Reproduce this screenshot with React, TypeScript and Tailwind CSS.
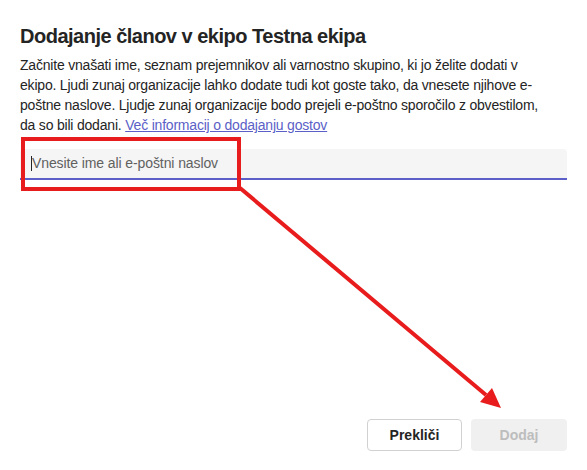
import React from "react";

const AddMembersDialog = () => {
  return (
    <div
      className="relative w-[587px] h-[470px] bg-white overflow-hidden flex flex-col px-5"
      style={{ fontFamily: '"Liberation Sans", Arial, sans-serif' }}
    >
      {/* Title */}
      <h1 className="pt-[22px] text-[20px] leading-[28px] font-semibold tracking-[-0.5px] text-[#242424]">
        Dodajanje članov v ekipo Testna ekipa
      </h1>

      {/* Description */}
      <p className="mt-[5px] text-[14px] leading-[20px] tracking-[-0.2px] text-[#242424] whitespace-nowrap">
        <span className="block">
          Začnite vnašati ime, seznam prejemnikov ali varnostno skupino, ki jo želite dodati v
        </span>
        <span className="block">
          ekipo. Ljudi zunaj organizacije lahko dodate tudi kot goste tako, da vnesete njihove e-
        </span>
        <span className="block">
          poštne naslove. Ljudje zunaj organizacije bodo prejeli e-poštno sporočilo z obvestilom,
        </span>
        <span className="block">
          da so bili dodani.{" "}
          <a href="#" className="text-[#5b5fc7] underline">
            Več informacij o dodajanju gostov
          </a>
        </span>
      </p>

      {/* Input */}
      <div className="mt-[14px] h-[31px] bg-[#f5f5f5] rounded-t-[4px] border-b-2 border-[#5b5fc7] flex items-center pl-[11px]">
        <span className="w-px h-[15px] bg-[#242424]" />
        <span className="text-[14px] tracking-[-0.1px] text-[#616161]">Vnesite ime ali e-poštni naslov</span>
      </div>

      <div className="flex-1" />

      {/* Actions */}
      <div className="flex justify-end gap-[9px] pb-[19px]">
        <button className="w-[95px] h-8 rounded-[4px] border border-[#d1d1d1] bg-white text-[14px] font-semibold text-[#242424]">
          Prekliči
        </button>
        <button
          disabled
          className="w-24 h-8 rounded-[4px] bg-[#f0f0f0] text-[14px] font-semibold text-[#bdbdbd]"
        >
          Dodaj
        </button>
      </div>

      {/* Annotation overlay */}
      <svg className="absolute inset-0 pointer-events-none" width="587" height="470">
        <rect x="23" y="139" width="216" height="50" fill="none" stroke="#e81c1c" strokeWidth="4" />
        <line x1="240" y1="188" x2="486" y2="395" stroke="#e81c1c" strokeWidth="4" />
        <polygon points="501,408 480,402 492,388" fill="#e81c1c" />
      </svg>
    </div>
  );
};

export default function App() {
  return <AddMembersDialog />;
}
